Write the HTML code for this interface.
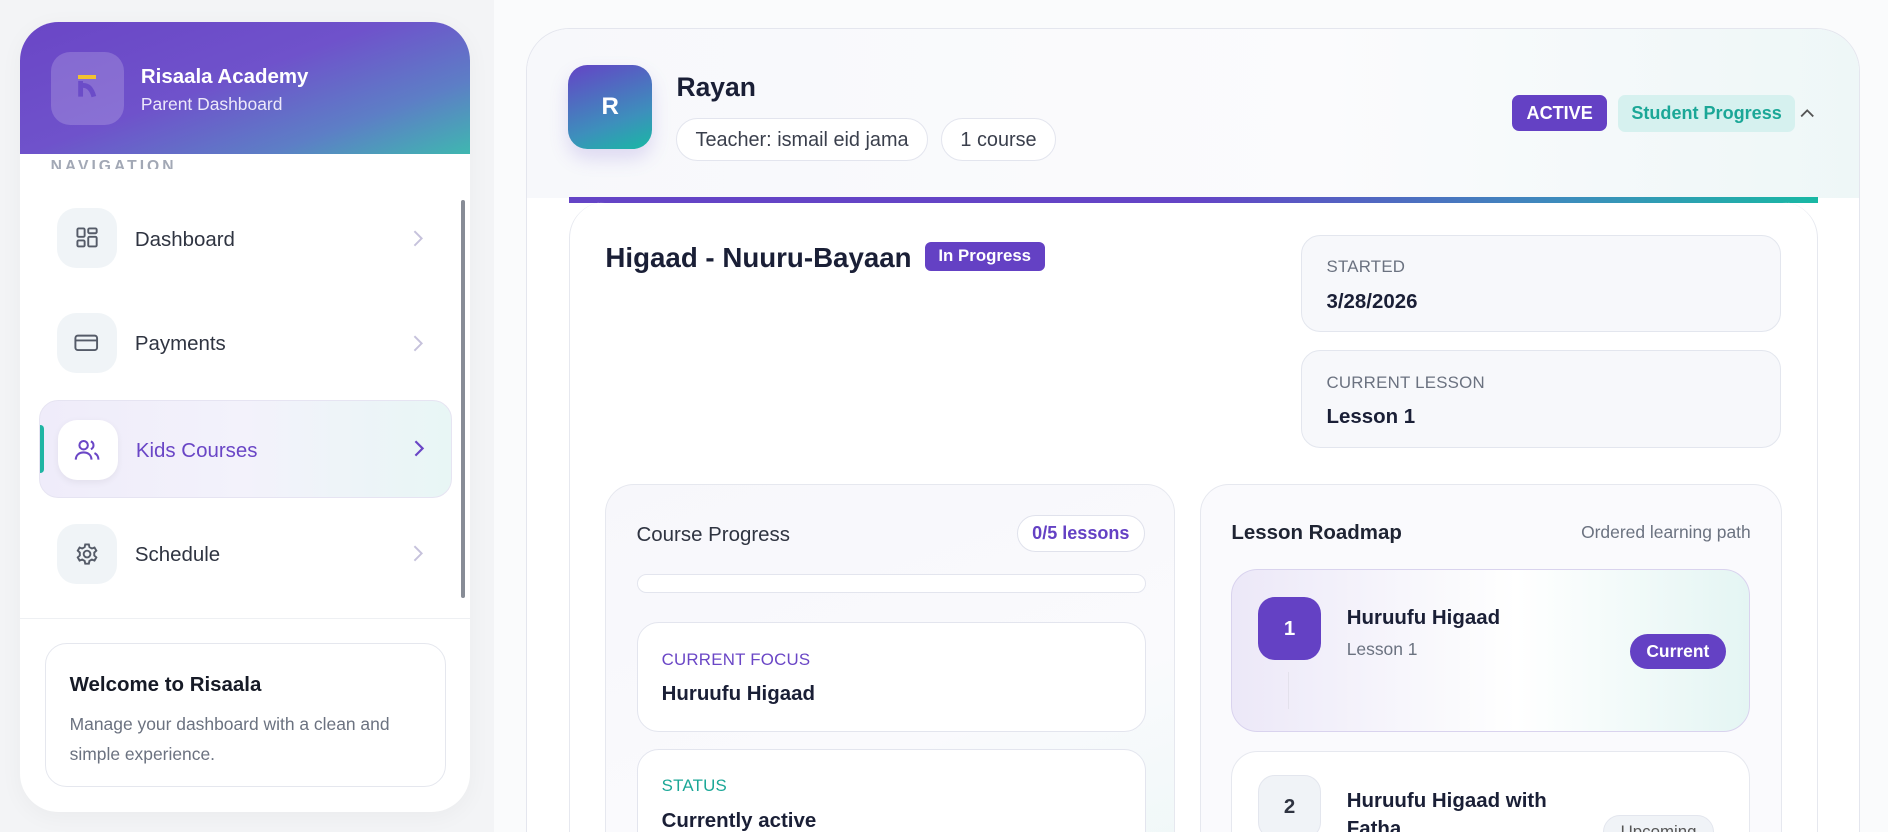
<!DOCTYPE html>
<html><head><meta charset="utf-8"><style>
*{box-sizing:border-box;margin:0;padding:0}
html,body{width:1888px;height:832px;overflow:hidden}
body{font-family:"Liberation Sans",sans-serif;background:#f3f4f6}
#z{zoom:1.20408;width:1568px;height:691px;position:relative;overflow:hidden;background:#f3f4f6}
.a{position:absolute}
.main{left:410px;top:0;width:1158px;height:691px;background:#fafbfc}
.side{left:17px;top:18px;width:373px;height:656px;background:#fff;border-radius:32px;overflow:hidden;box-shadow:0 4px 20px rgba(0,0,0,.04)}
.hdr{left:0;top:0;width:373px;height:110px;background:linear-gradient(160deg,#6a46c6 0%,#6f52cb 45%,#5d7ec6 75%,#3fb7b0 100%)}
.nav{left:15px;width:343px;height:82px;border-radius:16px}
.ib{left:15px;top:16px;width:50px;height:50px;border-radius:16px;background:#f0f4f7;display:flex;align-items:center;justify-content:center}
.nt{left:80px;top:32px;font-size:17px;color:#2f3441}
.ch{left:310px;top:34px}
.pill{border:1.5px solid #e3e5ee;border-radius:18px;height:36px;line-height:35px;padding:0 15px;font-size:16.5px;color:#3a3f4c;background:#fff}
.box{background:#f7f8fb;border:1px solid #e3e6ee;border-radius:16px}
.lab{font-size:14px;color:#6b7280;letter-spacing:.2px}
.val{font-size:17px;font-weight:bold;color:#1a1f36}
</style></head><body><div id="z">
<div class="a main"></div>
<div class="a side">
 <div class="a hdr"></div>
 <div class="a" style="left:25px;top:25px;width:61px;height:61px;border-radius:16px;background:rgba(255,255,255,.18)">
  <div class="a" style="left:23px;top:19px;width:15px;height:4px;background:#f2c230"></div>
  <svg class="a" style="left:22px;top:24px" width="18" height="14"><path d="M3 0v13M3 4q8-2 11 9" stroke="#6b4cc8" stroke-width="4" fill="none"/></svg>
 </div>
 <div class="a" style="left:100px;top:36px;font-size:17px;font-weight:bold;color:#fff">Risaala Academy</div>
 <div class="a" style="left:100px;top:60px;font-size:14.5px;color:#ece8fa">Parent Dashboard</div>
 <div class="a" style="left:25px;top:110px;font-size:13px;letter-spacing:2.5px;color:#a2a8b5;font-weight:bold;height:12px;overflow:hidden;line-height:22px">NAVIGATION</div>
 <div class="a nav" style="top:139px"><div class="a ib"><svg width="20" height="20" fill="none" stroke="#555b68" stroke-width="1.6"><rect x="2" y="2" width="6" height="7" rx="1"/><rect x="11" y="2" width="7" height="4" rx="1"/><rect x="2" y="12" width="6" height="5" rx="1"/><rect x="11" y="9" width="7" height="8" rx="1"/></svg></div><div class="a nt">Dashboard</div><svg class="a ch" width="10" height="14"><path d="M2 1l6 6-6 6" stroke="#c6c2dc" stroke-width="1.6" fill="none"/></svg></div>
 <div class="a nav" style="top:226px"><div class="a ib"><svg width="22" height="18" fill="none" stroke="#555b68" stroke-width="1.6"><rect x="2" y="3" width="18" height="12" rx="2"/><path d="M2 7h18"/></svg></div><div class="a nt">Payments</div><svg class="a ch" width="10" height="14"><path d="M2 1l6 6-6 6" stroke="#c6c2dc" stroke-width="1.6" fill="none"/></svg></div>
 <div class="a nav" style="top:314px;background:linear-gradient(90deg,#efecfa,#f3f2fb 50%,#e8f6f5);border:1px solid #e6e4f2;height:82px"><div class="a" style="left:0;top:20px;width:4px;height:40px;background:#1fb5a3;border-radius:0 3px 3px 0"></div><div class="a ib" style="background:#fff;box-shadow:0 2px 6px rgba(0,0,0,.06)"><svg width="22" height="20" fill="none" stroke="#6a46c6" stroke-width="1.7"><circle cx="8" cy="6" r="3.5"/><path d="M1.5 18c0-4 3-6 6.5-6s6.5 2 6.5 6"/><path d="M14 2.8a3.5 3.5 0 0 1 0 6.5M17 12.5c2 1 3.3 2.8 3.3 5.5"/></svg></div><div class="a nt" style="color:#6a46c6">Kids Courses</div><svg class="a ch" style="top:33px" width="10" height="14"><path d="M2 1l6 6-6 6" stroke="#6a46c6" stroke-width="1.8" fill="none"/></svg></div>
 <div class="a nav" style="top:401px"><div class="a ib"><svg width="20" height="20" fill="none" stroke="#555b68" stroke-width="1.6"><circle cx="10" cy="10" r="2.8"/><path d="M8.5 2h3l.5 2.3 2 1.1 2.2-.8 1.5 2.6-1.7 1.6v2.4l1.7 1.6-1.5 2.6-2.2-.8-2 1.1-.5 2.3h-3l-.5-2.3-2-1.1-2.2.8-1.5-2.6 1.7-1.6V8.8L2.3 7.2l1.5-2.6 2.2.8 2-1.1z"/></svg></div><div class="a nt">Schedule</div><svg class="a ch" width="10" height="14"><path d="M2 1l6 6-6 6" stroke="#c6c2dc" stroke-width="1.6" fill="none"/></svg></div>
 <div class="a" style="left:366px;top:148px;width:3px;height:331px;background:#878c96;border-radius:2px"></div>
 <div class="a" style="left:0;top:495px;width:373px;height:1px;background:#eef0f3"></div>
 <div class="a" style="left:20px;top:516px;width:333px;height:120px;border:1px solid #e5e7ee;border-radius:18px">
  <div class="a" style="left:20px;top:24px;font-size:17px;font-weight:bold;color:#161a26">Welcome to Risaala</div>
  <div class="a" style="left:20px;top:54px;width:300px;font-size:14.5px;line-height:25px;color:#6b7280">Manage your dashboard with a clean and simple experience.</div>
 </div>
</div>

<div class="a" style="left:437px;top:23px;width:1108px;height:668px;border:1px solid #e4e6ee;border-bottom:none;border-radius:36px 36px 0 0;background:#fff;overflow:hidden">
 <div class="a" style="left:0;top:0;width:1108px;height:141px;background:linear-gradient(90deg,#f7f8fb,#fbfbfd 60%,#eef7f7)"></div>
 <div class="a" style="left:34px;top:30px;width:70px;height:70px;border-radius:16px;background:linear-gradient(160deg,#6444c6,#3d8fbc 65%,#19b8a4);color:#fff;font-weight:bold;font-size:20px;text-align:center;line-height:70px;box-shadow:0 8px 16px rgba(100,70,200,.18)">R</div>
 <div class="a" style="left:124px;top:36px;font-size:22px;font-weight:bold;color:#1a1f36">Rayan</div>
 <div class="a pill" style="left:124px;top:74px">Teacher: ismail eid jama</div>
 <div class="a pill" style="left:344px;top:74px">1 course</div>
 <div class="a" style="left:818px;top:55px;width:79px;height:30px;background:#6441c4;color:#fff;font-weight:bold;font-size:15px;line-height:30px;text-align:center;border-radius:6px">ACTIVE</div>
 <div class="a" style="left:906px;top:55px;width:147px;height:31px;background:#d6f1ef;color:#1ba797;font-weight:bold;font-size:15px;line-height:31px;text-align:center;border-radius:6px">Student Progress</div>
 <svg class="a" style="left:1057px;top:66px" width="12" height="8"><path d="M1 7l5-5 5 5" stroke="#555" stroke-width="1.5" fill="none"/></svg>
 <div class="a" style="left:35px;top:140px;width:1037px;height:5px;background:linear-gradient(90deg,#6444c6 0%,#6444c6 50%,#3c8dbc 80%,#19b8a4)"></div>
 <div class="a" style="left:35px;top:144px;width:1037px;height:600px;border:1px solid #e6e8ef;border-radius:30px 30px 0 0;border-top:none"></div>
 <div class="a" style="left:65px;top:177px;font-size:23px;font-weight:bold;color:#1a1f36">Higaad - Nuuru-Bayaan</div>
 <div class="a" style="left:330px;top:177px;width:100px;height:24px;background:#6441c4;color:#fff;font-size:14px;font-weight:bold;text-align:center;line-height:24px;border-radius:5px">In Progress</div>
 <div class="a box" style="left:643px;top:171px;width:398px;height:81px"><div class="a lab" style="left:20px;top:18px">STARTED</div><div class="a val" style="left:20px;top:45px">3/28/2026</div></div>
 <div class="a box" style="left:643px;top:267px;width:398px;height:81px"><div class="a lab" style="left:20px;top:18px">CURRENT LESSON</div><div class="a val" style="left:20px;top:45px">Lesson 1</div></div>
 <div class="a" style="left:65px;top:378px;width:473px;height:340px;border:1px solid #e6e8ef;border-radius:24px;background:linear-gradient(160deg,#f7f7fb,#fafafd 60%,#eef8f7)">
  <div class="a" style="left:25px;top:32px;font-size:17px;color:#2f3441">Course Progress</div>
  <div class="a" style="left:341px;top:25px;width:106px;height:31px;border:1px solid #e0e2ec;border-radius:16px;background:#fff;color:#6441c4;font-size:15px;font-weight:bold;text-align:center;line-height:29px">0/5 lessons</div>
  <div class="a" style="left:25px;top:74px;width:423px;height:16px;border:1px solid #e3e5ee;border-radius:8px;background:#fff"></div>
  <div class="a" style="left:25px;top:114px;width:423px;height:91px;border:1px solid #e3e5ee;border-radius:18px;background:#fff"><div class="a lab" style="left:20px;top:22px;color:#6a46c6">CURRENT FOCUS</div><div class="a val" style="left:20px;top:49px">Huruufu Higaad</div></div>
  <div class="a" style="left:25px;top:219px;width:423px;height:91px;border:1px solid #e3e5ee;border-radius:18px;background:#fff"><div class="a lab" style="left:20px;top:22px;color:#1ba797">STATUS</div><div class="a val" style="left:20px;top:49px">Currently active</div></div>
 </div>
 <div class="a" style="left:559px;top:378px;width:483px;height:340px;border:1px solid #e6e8ef;border-radius:24px;background:#fafafd">
  <div class="a" style="left:25px;top:30px;font-size:17px;font-weight:bold;color:#1f2433">Lesson Roadmap</div>
  <div class="a" style="right:25px;top:31px;font-size:14.5px;color:#6b7280">Ordered learning path</div>
  <div class="a" style="left:25px;top:70px;width:431px;height:135px;border:1.5px solid #d9d3ee;border-radius:22px;background:linear-gradient(90deg,#ece8f8,#fbfbfd 45%,#fff 55%,#e4f5f3)">
   <div class="a" style="left:21px;top:22px;width:53px;height:53px;border-radius:14px;background:#6441c4;color:#fff;font-weight:bold;font-size:17px;text-align:center;line-height:53px">1</div>
   <div class="a" style="left:46px;top:85px;width:1px;height:30px;background:#e3e1ec"></div>
   <div class="a val" style="left:95px;top:30px">Huruufu Higaad</div>
   <div class="a" style="left:95px;top:57px;font-size:14.5px;color:#6b7280">Lesson 1</div>
   <div class="a" style="left:330px;top:53px;width:80px;height:29px;background:#6441c4;color:#fff;font-size:14.5px;font-weight:bold;text-align:center;line-height:29px;border-radius:15px">Current</div>
  </div>
  <div class="a" style="left:25px;top:221px;width:431px;height:135px;border:1px solid #e6e8ef;border-radius:22px;background:#fff">
   <div class="a" style="left:21px;top:19px;width:53px;height:53px;border-radius:14px;background:#f0f3f7;border:1px solid #e3e6ee;color:#2f3441;font-weight:bold;font-size:17px;text-align:center;line-height:51px">2</div>
   <div class="a val" style="left:95px;top:29px;width:200px;line-height:23px">Huruufu Higaad with Fatha</div>
   <div class="a" style="left:308px;top:52px;width:92px;height:29px;background:#f0f3f7;border:1px solid #e3e6ee;color:#555;font-size:14px;text-align:center;line-height:27px;border-radius:15px">Upcoming</div>
  </div>
 </div>
</div>
</div></body></html>
